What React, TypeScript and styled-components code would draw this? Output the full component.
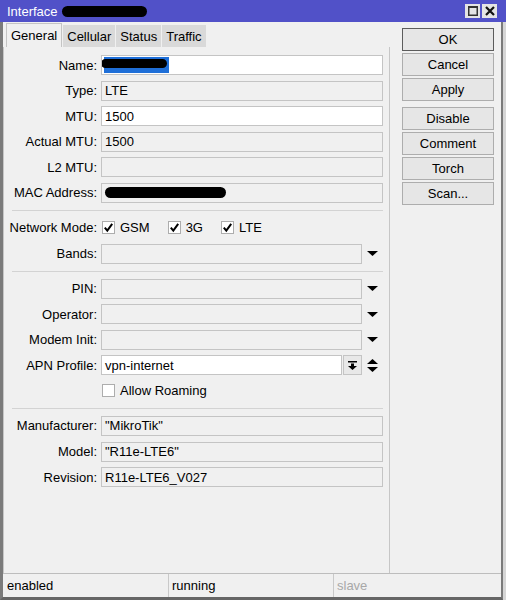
import React from "react";
import styled, { createGlobalStyle } from "styled-components";

const GlobalStyle = createGlobalStyle`
  html, body { margin: 0; padding: 0; background: #d6d6d6; }
  body { font-family: "Liberation Sans", Arial, sans-serif; font-size: 13px; color: #000; }
  * { box-sizing: border-box; }
`;

const Page = styled.div`
  width: 506px;
  height: 600px;
  display: flex;
  flex-direction: column;
  overflow: hidden;
`;

const TitleBar = styled.div`
  height: 22px;
  flex-shrink: 0;
  background: #5151c8;
  color: #fff;
  display: flex;
  align-items: center;
  padding-left: 7px;
`;

const TitleText = styled.span`
  font-size: 13px;
  margin-right: 4px;
`;

const Redact = styled.span<{ $w: number; $h: number }>`
  display: inline-block;
  flex-shrink: 0;
  width: ${(p) => p.$w}px;
  height: ${(p) => p.$h}px;
  background: #000;
  border-radius: 999px;
`;

const TitleButtons = styled.div`
  margin-left: auto;
  margin-right: 9px;
  display: flex;
  gap: 2px;
`;

const TitleButton = styled.div`
  width: 15px;
  height: 14px;
  background: #e4e4e4;
  display: flex;
  align-items: center;
  justify-content: center;
`;

const Frame = styled.div`
  width: 503px;
  flex: 1;
  min-height: 0;
  border-left: 3px solid #7b7b7b;
  border-right: 2px solid #7b7b7b;
  border-bottom: 3px solid #666;
  background: #f0f0f0;
  display: flex;
  flex-direction: column;
`;

const Body = styled.div`
  flex: 1;
  min-height: 0;
  display: flex;
`;

const MainPanel = styled.div`
  width: 387px;
  display: flex;
  flex-direction: column;
`;

const TabsRow = styled.div`
  height: 25px;
  flex-shrink: 0;
  display: flex;
  align-items: flex-end;
  padding-left: 3px;
`;

const Tab = styled.div<{ $active?: boolean }>`
  height: ${(p) => (p.$active ? 24 : 22)}px;
  padding: 0 4px;
  margin-left: ${(p) => (p.$active ? 0 : 1)}px;
  display: flex;
  align-items: center;
  background: ${(p) => (p.$active ? "#f0f0f0" : "#d9d9d9")};
  border: ${(p) => (p.$active ? "1px solid #c4c4c4" : "none")};
  border-bottom: none;
  white-space: nowrap;
`;

const FormArea = styled.div`
  flex: 1;
  border-left: 1px solid #c6c6c6;
  border-right: 1px solid #c6c6c6;
  padding: 8px 6px 0 0;
  display: flex;
  flex-direction: column;
`;

const Group = styled.div`
  display: flex;
  flex-direction: column;
  gap: 5.6px;
`;

const Row = styled.div`
  height: 20px;
  display: grid;
  grid-template-columns: 93px 1fr;
  column-gap: 4px;
  align-items: center;
`;

const Label = styled.div`
  text-align: right;
  white-space: nowrap;
`;

const ValueLine = styled.div`
  display: flex;
  align-items: center;
  height: 20px;
  min-width: 0;
`;

const Field = styled.div<{ $white?: boolean }>`
  flex: 1;
  height: 20px;
  min-width: 0;
  border: 1px solid #c4c4c4;
  background: ${(p) => (p.$white ? "#fff" : "#f0f0f0")};
  padding-left: 3px;
  display: flex;
  align-items: center;
  white-space: nowrap;
  overflow: hidden;
`;

const Selection = styled.div`
  width: 65px;
  height: 16px;
  background: #1f6fd8;
  margin-left: -1px;
  display: flex;
  align-items: flex-start;
`;

const ArrowSlot = styled.div`
  width: 21px;
  flex-shrink: 0;
  display: flex;
  justify-content: center;
  align-items: center;
`;

const SideButton = styled.div`
  width: 19px;
  height: 20px;
  margin-left: 1px;
  flex-shrink: 0;
  border: 1px solid #c4c4c4;
  background: #e8e8e8;
  display: flex;
  align-items: center;
  justify-content: center;
`;

const Separator = styled.div`
  height: 1px;
  background: #d3d3d3;
  margin: 7px 0 7px 8px;
  flex-shrink: 0;
`;

const CheckGroup = styled.div`
  display: flex;
  align-items: center;
  gap: 18px;
  padding-left: 1px;
`;

const CheckItem = styled.label`
  display: flex;
  align-items: center;
  gap: 5px;
  white-space: nowrap;
`;

const Box = styled.span`
  width: 13px;
  height: 13px;
  border: 1px solid #adadad;
  background: #fff;
  display: flex;
  align-items: center;
  justify-content: center;
`;

const SideColumn = styled.div`
  flex: 1;
  padding: 6px 0 0 12px;
  display: flex;
  flex-direction: column;
  gap: 2px;
`;

const Button = styled.div<{ $default?: boolean; $spaced?: boolean }>`
  width: 92px;
  height: 23px;
  border: 1px solid ${(p) => (p.$default ? "#5c5c5c" : "#adadad")};
  background: #e6e6e6;
  display: flex;
  align-items: center;
  justify-content: center;
  margin-top: ${(p) => (p.$spaced ? 4 : 0)}px;
`;

const StatusBar = styled.div`
  height: 24px;
  flex-shrink: 0;
  border-top: 1px solid #bdbdbd;
  display: flex;
`;

const StatusCell = styled.div<{ $w?: number; $muted?: boolean; $first?: boolean }>`
  ${(p) => (p.$w ? `width: ${p.$w}px;` : "flex: 1;")}
  border-left: ${(p) => (p.$first ? "none" : "1px solid #c9c9c9")};
  padding-left: ${(p) => (p.$first ? 4 : 3)}px;
  color: ${(p) => (p.$muted ? "#a8a8a8" : "#000")};
  display: flex;
  align-items: center;
`;

const Down = () => (
  <svg width="11" height="5" viewBox="0 0 11 5">
    <polygon points="0,0 11,0 5.5,5" fill="#000" />
  </svg>
);

const UpDown = () => (
  <svg width="11" height="13" viewBox="0 0 11 13">
    <polygon points="0,5 11,5 5.5,0" fill="#000" />
    <polygon points="0,8 11,8 5.5,13" fill="#000" />
  </svg>
);

const ToBottom = () => (
  <svg width="9" height="9" viewBox="0 0 9 9">
    <rect x="0" y="0" width="9" height="1.5" fill="#000" />
    <rect x="3" y="2.5" width="3" height="2.5" fill="#000" />
    <polygon points="0,5 9,5 4.5,9" fill="#000" />
  </svg>
);

const Check = () => (
  <svg width="11" height="11" viewBox="0 0 11 11">
    <path d="M1.8 5.6 L4.3 8.6 L9.2 1.8" stroke="#000" strokeWidth="2" fill="none" />
  </svg>
);

const CheckBox: React.FC<{ checked?: boolean; label: string }> = ({ checked, label }) => (
  <CheckItem>
    <Box>{checked && <Check />}</Box>
    {label}
  </CheckItem>
);

const FieldRow: React.FC<{
  label: string;
  value?: React.ReactNode;
  white?: boolean;
  arrow?: "down" | "updown";
  side?: boolean;
}> = ({ label, value, white, arrow, side }) => (
  <Row>
    <Label>{label}</Label>
    <ValueLine>
      <Field $white={white}>{value}</Field>
      {side && (
        <SideButton>
          <ToBottom />
        </SideButton>
      )}
      {arrow && <ArrowSlot>{arrow === "down" ? <Down /> : <UpDown />}</ArrowSlot>}
    </ValueLine>
  </Row>
);

export default function App() {
  return (
    <>
      <GlobalStyle />
      <Page>
        <TitleBar>
          <TitleText>Interface</TitleText>
          <Redact $w={85} $h={11} />
          <TitleButtons>
            <TitleButton>
              <svg width="10" height="10" viewBox="0 0 10 10">
                <rect x="0.75" y="0.75" width="8.5" height="8.5" stroke="#333" strokeWidth="1.5" fill="none" />
                <rect x="0" y="0" width="10" height="2" fill="#333" />
              </svg>
            </TitleButton>
            <TitleButton>
              <svg width="10" height="10" viewBox="0 0 10 10">
                <path d="M1 1 L9 9 M9 1 L1 9" stroke="#111" strokeWidth="2.2" />
              </svg>
            </TitleButton>
          </TitleButtons>
        </TitleBar>
        <Frame>
          <Body>
            <MainPanel>
              <TabsRow>
                <Tab $active>General</Tab>
                <Tab>Cellular</Tab>
                <Tab>Status</Tab>
                <Tab>Traffic</Tab>
              </TabsRow>
              <FormArea>
                <Group>
                  <FieldRow
                    label="Name:"
                    white
                    value={
                      <Selection>
                        <Redact $w={66} $h={9} style={{ marginTop: 2, marginLeft: -3 }} />
                      </Selection>
                    }
                  />
                  <FieldRow label="Type:" value="LTE" />
                  <FieldRow label="MTU:" value="1500" white />
                  <FieldRow label="Actual MTU:" value="1500" />
                  <FieldRow label="L2 MTU:" />
                  <FieldRow label="MAC Address:" value={<Redact $w={121} $h={11} />} />
                </Group>
                <Separator />
                <Group>
                  <Row>
                    <Label>Network Mode:</Label>
                    <CheckGroup>
                      <CheckBox checked label="GSM" />
                      <CheckBox checked label="3G" />
                      <CheckBox checked label="LTE" />
                    </CheckGroup>
                  </Row>
                  <FieldRow label="Bands:" arrow="down" />
                </Group>
                <Separator />
                <Group>
                  <FieldRow label="PIN:" arrow="down" />
                  <FieldRow label="Operator:" arrow="down" />
                  <FieldRow label="Modem Init:" arrow="down" />
                  <FieldRow label="APN Profile:" value="vpn-internet" white side arrow="updown" />
                  <Row>
                    <Label />
                    <CheckGroup>
                      <CheckBox label="Allow Roaming" />
                    </CheckGroup>
                  </Row>
                </Group>
                <Separator />
                <Group>
                  <FieldRow label="Manufacturer:" value={'"MikroTik"'} />
                  <FieldRow label="Model:" value={'"R11e-LTE6"'} />
                  <FieldRow label="Revision:" value="R11e-LTE6_V027" />
                </Group>
              </FormArea>
            </MainPanel>
            <SideColumn>
              <Button $default>OK</Button>
              <Button>Cancel</Button>
              <Button>Apply</Button>
              <Button $spaced>Disable</Button>
              <Button>Comment</Button>
              <Button>Torch</Button>
              <Button>Scan...</Button>
            </SideColumn>
          </Body>
          <StatusBar>
            <StatusCell $first $w={165}>enabled</StatusCell>
            <StatusCell $w={165}>running</StatusCell>
            <StatusCell $muted>slave</StatusCell>
          </StatusBar>
        </Frame>
      </Page>
    </>
  );
}
